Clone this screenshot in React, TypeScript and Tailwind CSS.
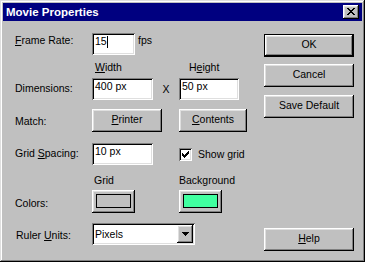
import React from 'react';

// classic 3d edges, drawn with stacked inset shadows
const raised = 'shadow-[inset_-1px_-1px_0_#000,inset_1px_1px_0_#fff,inset_-2px_-2px_0_#808080,inset_2px_2px_0_#dfdfdf]';
const sunken = 'shadow-[inset_1px_1px_0_#808080,inset_-1px_-1px_0_#fff,inset_2px_2px_0_#000,inset_-2px_-2px_0_#dfdfdf]';
const frame = 'shadow-[inset_-1px_-1px_0_#000,inset_1px_1px_0_#dfdfdf,inset_-2px_-2px_0_#808080,inset_2px_2px_0_#fff]';

function Button({ children, className = '' }: { children: React.ReactNode; className?: string }) {
  return (
    <div className={`${raised} bg-[#c0c0c0] h-[23px] flex items-center justify-center pb-[2px] ${className}`}>
      {children}
    </div>
  );
}

function Field({ value, className = '', caret = false }: { value: string; className?: string; caret?: boolean }) {
  return (
    <div className={`${sunken} bg-white h-[22px] pl-[3px] pt-[2px] flex items-start ${className}`}>
      <span>{value}</span>
      {caret && <span className="w-px h-[12px] mt-px bg-black" />}
    </div>
  );
}

function Swatch({ color }: { color: string }) {
  return (
    <div className={`${raised} bg-[#c0c0c0] w-[43px] h-[23px] flex items-center justify-center pb-px`}>
      <div className="w-[35px] h-[14px] border border-black" style={{ background: color }} />
    </div>
  );
}

function CloseGlyph() {
  return (
    <svg width="8" height="7" viewBox="0 0 8 7" shapeRendering="crispEdges">
      <path
        d="M0 0h2v1h-2zM6 0h2v1h-2zM1 1h2v1h-2zM5 1h2v1h-2zM2 2h4v1h-4zM3 3h2v1h-2zM2 4h4v1h-4zM1 5h2v1h-2zM5 5h2v1h-2zM0 6h2v1h-2zM6 6h2v1h-2z"
        fill="#000"
      />
    </svg>
  );
}

function CheckGlyph() {
  return (
    <svg width="7" height="7" viewBox="0 0 7 7" shapeRendering="crispEdges">
      <path
        d="M6 0h1v1h-1zM5 1h2v1h-2zM0 2h1v1h-1zM4 2h3v1h-3zM0 3h2v1h-2zM3 3h3v1h-3zM0 4h5v1h-5zM1 5h3v1h-3zM2 6h1v1h-1z"
        fill="#000"
      />
    </svg>
  );
}

function ArrowGlyph() {
  return (
    <svg width="7" height="4" viewBox="0 0 7 4" shapeRendering="crispEdges">
      <path d="M0 0h7v1h-7zM1 1h5v1h-5zM2 2h3v1h-3zM3 3h1v1h-1z" fill="#000" />
    </svg>
  );
}

export default function App() {
  return (
    <div
      className={`${frame} w-[365px] h-[262px] bg-[#c0c0c0] p-[3px] flex flex-col text-black text-[10.5px] leading-[13px] font-['Liberation_Sans',Arial,sans-serif]`}
    >
      {/* title bar */}
      <div className="h-[18px] bg-[#000080] flex items-center justify-between pl-[3px] pr-[3px]">
        <span className="text-white font-bold text-[11.5px]">Movie Properties</span>
        <div className={`${raised} bg-[#c0c0c0] w-[16px] h-[14px] flex items-center justify-center pr-px pb-px`}>
          <CloseGlyph />
        </div>
      </div>

      <div className="flex flex-1 pl-[12px] pt-[12px]">
        {/* form */}
        <div className="w-[249px] flex flex-col">
          <div className="flex h-[22px]">
            <div className="w-[77px] pt-[1px]">
              <u>F</u>rame Rate:
            </div>
            <Field value="15" caret className="w-[43px]" />
            <span className="ml-[3px] pt-[1px]">fps</span>
          </div>

          <div className="flex mt-[6px] h-[13px]">
            <div className="w-[77px]" />
            <div className="w-[87px] pl-[3px]">
              <u>W</u>idth
            </div>
            <div className="pl-[10px]">
              H<u>e</u>ight
            </div>
          </div>

          <div className="flex h-[22px] mt-[4px]">
            <div className="w-[77px] pt-[4px]">Dimensions:</div>
            <Field value="400 px" className="w-[61px]" />
            <div className="w-[26px] text-center pt-[5px]">X</div>
            <Field value="50 px" className="w-[60px]" />
          </div>

          <div className="flex h-[23px] mt-[9px]">
            <div className="w-[77px] pt-[6px]">Match:</div>
            <Button className="w-[70px]">
              <span>
                <u>P</u>rinter
              </span>
            </Button>
            <div className="w-[17px]" />
            <Button className="w-[68px]">
              <span>
                <u>C</u>ontents
              </span>
            </Button>
          </div>

          <div className="flex h-[22px] mt-[11px]">
            <div className="w-[77px] pt-[4px]">
              Grid <u>S</u>pacing:
            </div>
            <Field value="10 px" className="w-[61px]" />
            <div className="w-[26px]" />
            <div className={`${sunken} bg-white w-[13px] h-[13px] mt-[5px] flex items-center justify-center`}>
              <CheckGlyph />
            </div>
            <span className="ml-[6px] pt-[5px]">Show grid</span>
          </div>

          <div className="flex mt-[9px] h-[13px]">
            <div className="w-[77px]" />
            <div className="w-[86px] pl-[2px]">Grid</div>
            <div className="pl-[1px]">Background</div>
          </div>

          <div className="flex h-[23px] mt-[3px]">
            <div className="w-[77px] pt-[7px]">Colors:</div>
            <Swatch color="#c0c0c0" />
            <div className="w-[44px]" />
            <Swatch color="#40ffa0" />
          </div>

          <div className="flex h-[22px] mt-[10px]">
            <div className="w-[77px] pt-[6px] pl-px">
              Ruler <u>U</u>nits:
            </div>
            <div className={`${sunken} bg-white w-[103px] h-[22px] flex p-[2px]`}>
              <div className="flex-1 flex items-center pl-px">Pixels</div>
              <div className={`${raised} bg-[#c0c0c0] w-[16px] h-full flex items-center justify-center`}>
                <ArrowGlyph />
              </div>
            </div>
          </div>
        </div>

        {/* buttons */}
        <div className="w-[90px] flex flex-col pt-px">
          <div className="border border-black h-[23px]">
            <Button className="w-full !h-[21px]">OK</Button>
          </div>
          <Button className="w-full mt-[7px]">Cancel</Button>
          <Button className="w-full mt-[8px]">Save Default</Button>
          <Button className="w-full mt-[110px]">
            <span>
              <u>H</u>elp
            </span>
          </Button>
        </div>
      </div>
    </div>
  );
}
